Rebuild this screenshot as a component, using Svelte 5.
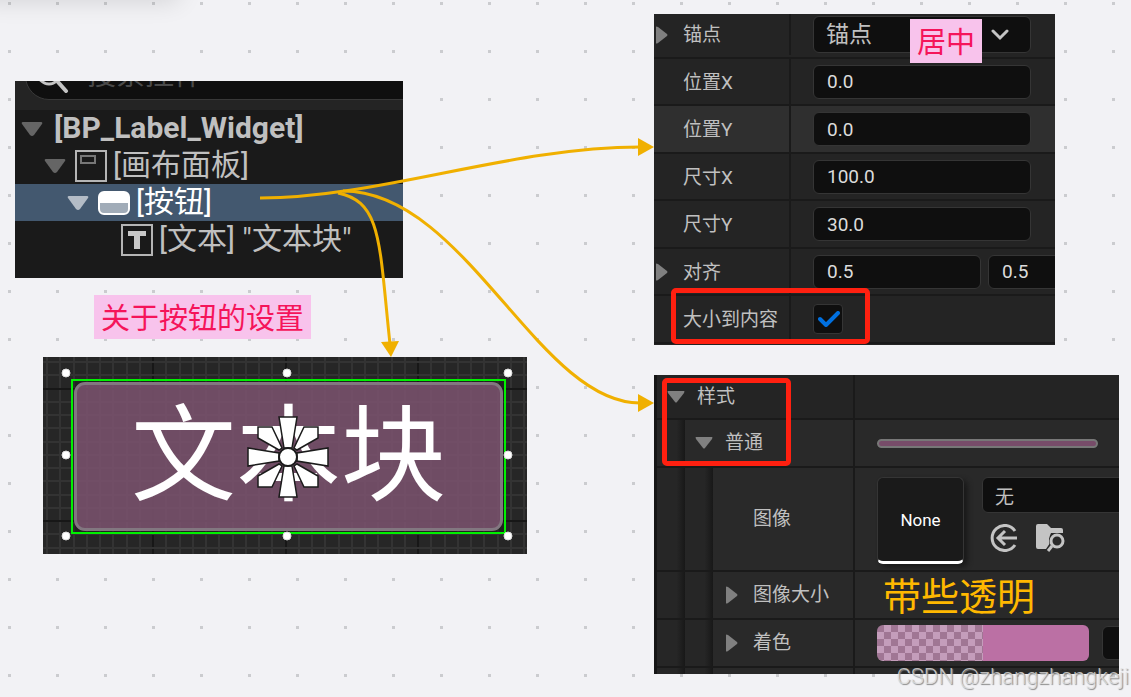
<script>
  let tree = [
    { depth: 0, text: '[BP_Label_Widget]', root: true, open: true },
    { depth: 1, text: '[画布面板]', icon: 'canvas', open: true },
    { depth: 2, text: '[按钮]', icon: 'button', open: true, selected: true },
    { depth: 3, text: '[文本] "文本块"', icon: 'text' }
  ];

  let slots = [
    { id: 'pos-x', label: '位置X', values: ['0.0'] },
    { id: 'pos-y', label: '位置Y', values: ['0.0'], hover: true },
    { id: 'size-x', label: '尺寸X', values: ['100.0'] },
    { id: 'size-y', label: '尺寸Y', values: ['30.0'] },
    { id: 'align', label: '对齐', values: ['0.5', '0.5'], expandable: true }
  ];

  let sizeToContent = true;
  let anchor = '锚点';
  let image = '无';

  // designer grid: ten minor cells per major cell
  const cell = 13.25;
  const cols = Array.from({ length: 37 }, (_, i) => ({ at: Math.round(3 + i * cell), major: i % 10 === 8 }));
  const lines = Array.from({ length: 15 }, (_, i) => ({ at: Math.round(4 + i * cell), major: i % 10 === 2 }));
  const handles = [[23, 16], [244, 16], [465, 16], [23, 98], [465, 98], [23, 179], [244, 179], [465, 179]];
</script>

{#snippet down()}
  <svg class="tri" width="22" height="14" viewBox="0 0 22 14"><path d="M2 0h18q2 0 1 2L13 13q-2 2-4 0L1 2Q0 0 2 0z" fill="currentColor" /></svg>
{/snippet}
{#snippet downSmall()}
  <svg class="tri" width="18" height="12" viewBox="0 0 18 12"><path d="M1 0h16q1 0 0 2L10 11q-1 1-2 0L1 2Q0 0 1 0z" fill="currentColor" /></svg>
{/snippet}
{#snippet right()}
  <svg class="tri" width="12" height="18" viewBox="0 0 12 18"><path d="M0 1q0-1 2 0l9 7q1 1 0 2l-9 7q-2 1-2 0z" fill="currentColor" /></svg>
{/snippet}
{#snippet grid()}
  {#each cols as c}<rect x={c.at} y="0" width="2" height="197" fill={c.major ? '#171717' : '#333'} />{/each}
  {#each lines as l}<rect x="0" y={l.at} width="484" height="2" fill={l.major ? '#171717' : '#333'} />{/each}
{/snippet}

<main class="board">
  <div class="toolbar-shadow"></div>

  <section class="panel hierarchy">
    <div class="search-wrap">
      <label class="search">
        <svg width="34" height="34" viewBox="0 0 34 34" fill="none" stroke="#c4c4c4"><circle cx="13" cy="14" r="11" stroke-width="3" /><path d="M21 22l9 10" stroke-width="4" stroke-linecap="round" /></svg>
        <input type="search" placeholder="搜索控件" aria-label="搜索控件" />
      </label>
    </div>
    <ul>
      {#each tree as row}
        <li class:selected={row.selected} class:root={row.root} style="padding-left: {6 + row.depth * 23}px">
          {#if row.open}
            <button class="toggle" aria-label="展开">{@render down()}</button>
          {:else}
            <span class="toggle"></span>
          {/if}
          {#if row.icon === 'canvas'}
            <svg class="icon" width="32" height="32" viewBox="0 0 32 32" fill="none"><rect x="1" y="1" width="30" height="30" stroke="#b5b5b5" stroke-width="2" /><rect x="6" y="6" width="14" height="7" stroke="#777" stroke-width="2" /></svg>
          {:else if row.icon === 'button'}
            <svg class="icon" width="32" height="24" viewBox="0 0 32 24"><rect x="1" y="1" width="30" height="22" rx="5" fill="#a1acb8" stroke="#fff" stroke-width="2" /><path d="M1 12V6q0-5 5-5h20q5 0 5 5v6z" fill="#fff" /></svg>
          {:else if row.icon === 'text'}
            <svg class="icon" width="32" height="32" viewBox="0 0 32 32"><rect x="1" y="1" width="30" height="30" fill="none" stroke="#b5b5b5" stroke-width="2" /><path d="M7 7h18v5h-6v13h-6V12H7z" fill="#c8c8c8" /></svg>
          {/if}
          <span class="text">{row.text}</span>
        </li>
      {/each}
    </ul>
  </section>

  <p class="note title-note">关于按钮的设置</p>

  <section class="panel designer">
    <svg class="grid" width="484" height="197">{@render grid()}</svg>
    <div class="outline"><button class="preview">文本块</button></div>
    <svg class="overlay" width="484" height="197">
      {#each handles as [x, y]}<circle cx={x} cy={y} r="4" fill="#fff" stroke="#ddd" stroke-width="1" />{/each}
      <g transform="translate(245 100)" fill="#fff" stroke="#1b1b1b" stroke-width="1.5">
        {#each [0, 90, 180, 270] as a}
          <path d="M-9-40H9L4-9h-8z" transform="rotate({a})" />
        {/each}
        <path d="M-30-30h14L-6-9l-3 2-21-12z" />
        <path d="M30-30H16L6-9l3 2 21-12z" />
        <path d="M-30 30h14L-6 9l-3-2-21 12z" />
        <path d="M30 30H16L6 9l3-2 21 12z" />
        <circle r="9" stroke-width="2" />
      </g>
    </svg>
  </section>

  <section class="panel details">
    <div class="row first">
      <div class="name">{@render right()}<label for="anchor">锚点</label></div>
      <div class="value">
        <div class="select-wrap">
          <select id="anchor" bind:value={anchor}><option>锚点</option></select>
          <svg width="18" height="12" viewBox="0 0 18 12" fill="none" stroke="#c4c4c4" stroke-width="3"><path d="M2 2l7 7 7-7" stroke-linecap="round" /></svg>
        </div>
      </div>
    </div>
    {#each slots as s}
      <div class="row" class:hover={s.hover}>
        <div class="name">{#if s.expandable}{@render right()}{/if}<label for={s.id}>{s.label}</label></div>
        <div class="value">
          {#each s.values as v, i}
            <input type="text" class:half={s.values.length > 1} id={i ? s.id + i : s.id} aria-label={s.label} value={v} />
          {/each}
        </div>
      </div>
    {/each}
    <div class="row">
      <div class="name"><label for="fit">大小到内容</label></div>
      <div class="value check">
        <input type="checkbox" id="fit" bind:checked={sizeToContent} />
        {#if sizeToContent}<svg width="22" height="16" viewBox="0 0 22 16" fill="none" stroke="#0070e0" stroke-width="4"><path d="M2 8l6 6L20 2" stroke-linecap="round" stroke-linejoin="round" /></svg>{/if}
      </div>
    </div>
    <div class="mark fit-mark"></div>
  </section>

  <p class="note anchor-note">居中</p>

  <section class="panel style-panel">
    <div class="row top">
      <div class="name"><div class="cell">{@render downSmall()}<span>样式</span></div></div>
      <div class="value"></div>
    </div>
    <div class="row">
      <div class="name"><i class="indent"></i><div class="cell">{@render downSmall()}<span>普通</span></div></div>
      <div class="value"><div class="brush"></div></div>
    </div>
    <div class="row tall">
      <div class="name"><i class="indent"></i><i class="indent"></i><div class="cell leaf"><label for="image">图像</label></div></div>
      <div class="value asset">
        <button class="thumb">None</button>
        <div class="picker">
          <input type="text" id="image" bind:value={image} />
          <div class="tools">
            <button aria-label="使用所选资产">
              <svg width="28" height="28" viewBox="0 0 28 28" fill="none" stroke="#c4c4c4" stroke-width="3"><path d="M25 7A12.500 12.500 0 1 0 25 21" /><path d="M27 14H9M15 7l-7 7 7 7" /></svg>
            </button>
            <button aria-label="浏览资产">
              <svg width="30" height="28" viewBox="0 0 30 28"><path d="M1 2q0-2 2-2h9l4 4h10q2 0 2 2v3H16q-3 6-1 10l-4 6H3q-2 0-2-2z" fill="#c4c4c4" /><circle cx="22" cy="17" r="8" fill="#292929" /><circle cx="22" cy="17" r="6" fill="none" stroke="#c4c4c4" stroke-width="3" /><path d="M17 22l-4 5" stroke="#c4c4c4" stroke-width="3" /></svg>
            </button>
          </div>
        </div>
      </div>
    </div>
    <div class="row">
      <div class="name"><i class="indent"></i><i class="indent"></i><div class="cell">{@render right()}<span>图像大小</span></div></div>
      <div class="value"><p class="alpha-note">带些透明</p></div>
    </div>
    <div class="row">
      <div class="name"><i class="indent"></i><i class="indent"></i><div class="cell">{@render right()}<span>着色</span></div></div>
      <div class="value">
        <button class="swatch" aria-label="着色"><span></span><span></span></button>
        <input type="text" class="clip" aria-label="颜色" />
      </div>
    </div>
    <div class="row last"><div class="name"><i class="indent"></i><i class="indent"></i></div><div class="value"></div></div>
    <div class="mark style-mark"></div>
  </section>

  <svg class="links" width="700" height="450" fill="none" stroke="#f0b000" stroke-width="3">
    <path d="M260 198C380 198 510 147 640 147" />
    <path d="M343 191C465 191 538 403 640 403" />
    <path d="M338 193C382 202 379 242 390 344" />
    <g fill="#f0b000" stroke="none">
      <path d="M638 138l16 9-16 9z" />
      <path d="M638 394l16 9-16 9z" />
      <path d="M381 342l18-1-8 16z" />
    </g>
  </svg>

  <p class="watermark">CSDN @zhangzhangkeji</p>
</main>

<style>
  :global(body) { margin: 0; }
  .board {
    position: relative; min-height: 100vh; overflow: hidden; background: #f2f2f5;
    font-family: Roboto, "Noto Sans CJK SC", sans-serif; font-size: 19px; line-height: 24px; color: #c0c0c0;
  }
  .board::before {
    content: ''; position: absolute; inset: 0;
    background: conic-gradient(from 270deg at 3px 3px, #cbcccf 90deg, transparent 0) 8px 2px / 48px 48px;
  }
  .toolbar-shadow { position: absolute; left: -20px; top: -40px; width: 200px; height: 36px; border-radius: 8px; box-shadow: 0 6px 24px rgba(0, 0, 0, 0.12); }
  p, ul { margin: 0; padding: 0; }
  button, input, select { font: inherit; color: inherit; margin: 0; border: 0; padding: 0; background: none; box-sizing: border-box; }
  svg { display: block; flex: none; }
  .panel { position: absolute; overflow: hidden; box-sizing: border-box; }
  .tri { color: #808080; }

  .hierarchy { left: 15px; top: 81px; width: 388px; height: 197px; background: #1a1a1a; font-size: 30px; line-height: 36px; }
  .search-wrap { display: flex; align-items: flex-end; height: 29px; padding: 0 0 10px 10px; box-sizing: border-box; background: #242424; }
  .search { display: flex; align-items: flex-end; flex: 1 0 auto; gap: 17px; height: 48px; margin-right: -40px; padding: 0 0 6px 10px; box-sizing: border-box; background: #0f0f0f; border: 1px solid #383838; border-radius: 24px; }
  .search input { flex: 1; height: 36px; font-size: 29px; color: #4a4a4a; outline: 0; }
  .search input::placeholder { color: #4a4a4a; opacity: 1; }
  .hierarchy ul { list-style: none; }
  li { display: flex; align-items: center; height: 37px; white-space: pre; }
  li .toggle { width: 22px; margin-right: 9px; }
  li .tri { color: #656565; }
  li .icon { margin-right: 6px; }
  li .text { padding-bottom: 2px; }
  li.selected { background: #43586f; color: #fff; }
  li.selected .tri { color: #b4bcc6; }
  li.root { font-weight: 700; }
  li.root .text { padding-left: 2px; }

  .note { position: absolute; padding: 6px 7px 2px; font-size: 29px; line-height: 36px; color: #f5145a; background: #f8c3ec; }
  .title-note { left: 94px; top: 295px; }
  .anchor-note { left: 910px; top: 19px; }

  .designer { left: 43px; top: 357px; width: 484px; height: 197px; padding: 22px 21px 20px 28px; background: #262626; }
  .grid, .overlay { position: absolute; left: 0; top: 0; }
  .outline { position: relative; height: 155px; padding: 1px; box-sizing: border-box; border: 2px solid #00f000; background: rgba(20, 20, 20, 0.3); }
  .preview { display: block; width: 100%; height: 100%; border: 3px solid #827780; border-radius: 11px; background: rgba(126, 85, 113, 0.85); color: #fff; font-size: 105px; line-height: 140px; }

  .details { left: 654px; top: 14px; width: 401px; height: 331px; background: #242424; }
  .row { display: flex; height: 48px; box-sizing: border-box; border-bottom: 2px solid #1a1a1a; }
  .row:nth-child(even) { height: 47px; }
  .row.first { height: 45px; padding-bottom: 2px; }
  .row.hover { background: #2f2f2f; }
  .details .name { display: flex; align-items: center; justify-content: flex-end; width: 137px; box-sizing: border-box; border-right: 2px solid #1a1a1a; flex: none; }
  .details .name label { width: 106px; padding-top: 2px; }
  .details .first label { padding-top: 0; }
  .details .name .tri { margin-right: 15px; }
  .value { display: flex; align-items: center; gap: 7px; flex: 1; min-width: 0; padding-left: 22px; }
  .details .value { flex: none; }
  input[type='text'] { width: 218px; height: 34px; padding: 0 13px; flex: none; background: #0f0f0f; border: 1px solid #353535; border-radius: 6px; color: #dcdcdc; }
  input.half { width: 168px; }
  .select-wrap { position: relative; width: 218px; height: 37px; }
  select { width: 100%; height: 100%; padding: 0 12px; appearance: none; font-size: 23px; background: #0f0f0f; border: 1px solid #353535; border-radius: 6px; }
  .select-wrap svg { position: absolute; right: 22px; top: 13px; }
  .check { position: relative; }
  .check input { appearance: none; width: 30px; height: 30px; border: 1px solid #353535; border-radius: 4px; background: #0f0f0f; }
  .check svg { position: absolute; left: 27px; top: 15px; pointer-events: none; }
  .mark { position: absolute; border: 5px solid #ff2010; border-radius: 5px; box-sizing: border-box; }
  .fit-mark { left: 17px; top: 274px; width: 199px; height: 56px; }

  .style-panel { left: 654px; top: 375px; width: 465px; height: 299px; padding-left: 3px; background: #161616; }
  .style-panel .row { height: 48px; background: #292929; }
  .style-panel .row.top { height: 45px; background: #242424; }
  .style-panel .row.tall { height: 104px; }
  .style-panel .name { display: flex; width: 198px; box-sizing: border-box; border-right: 2px solid #1a1a1a; flex: none; }
  .cell { display: flex; align-items: center; gap: 12px; padding-left: 10px; }
  .cell .tri { width: 18px; }
  .leaf { padding-left: 40px; }
  .indent { width: 28px; flex: none; background: linear-gradient(90deg, #262626 70%, #181818); }
  .brush { width: 221px; height: 9px; box-sizing: border-box; border: 2px solid #777; border-radius: 5px; background: #774c69; }
  .asset { gap: 18px; align-items: flex-start; padding-top: 9px; }
  .thumb { width: 87px; height: 87px; flex: none; font-size: 17px; color: #fff; background: #1a1a1a; border: 1px solid #353535; border-bottom: 3px solid #fff; border-radius: 6px; box-shadow: 4px 3px 5px #1a1a1a; }
  .picker { display: flex; flex-direction: column; gap: 11px; }
  .picker input { height: 36px; padding: 0 12px; color: #c0c0c0; }
  .tools { display: flex; gap: 17px; padding-left: 8px; }
  .alpha-note { font-size: 38px; line-height: 44px; padding: 4px 0 0 6px; color: #ffb800; white-space: nowrap; }
  .swatch { display: flex; width: 212px; height: 36px; flex: none; overflow: hidden; border-radius: 6px; }
  .swatch span { flex: 1; height: 100%; background: #bb70a4; }
  .swatch span:first-child { background: repeating-conic-gradient(#c49dbb 0 90deg, #a07694 0 180deg) 0 0 / 14px 14px; }
  .clip { margin-left: 6px; }
  .style-mark { left: 8px; top: 3px; width: 129px; height: 88px; }

  .links { position: absolute; left: 0; top: 0; pointer-events: none; }
  .watermark { position: absolute; right: 2px; bottom: 6px; font-size: 22px; font-weight: 300; line-height: 28px; color: rgba(225, 225, 225, 0.8); text-shadow: 1px 1px 1px #888; white-space: nowrap; }
</style>
